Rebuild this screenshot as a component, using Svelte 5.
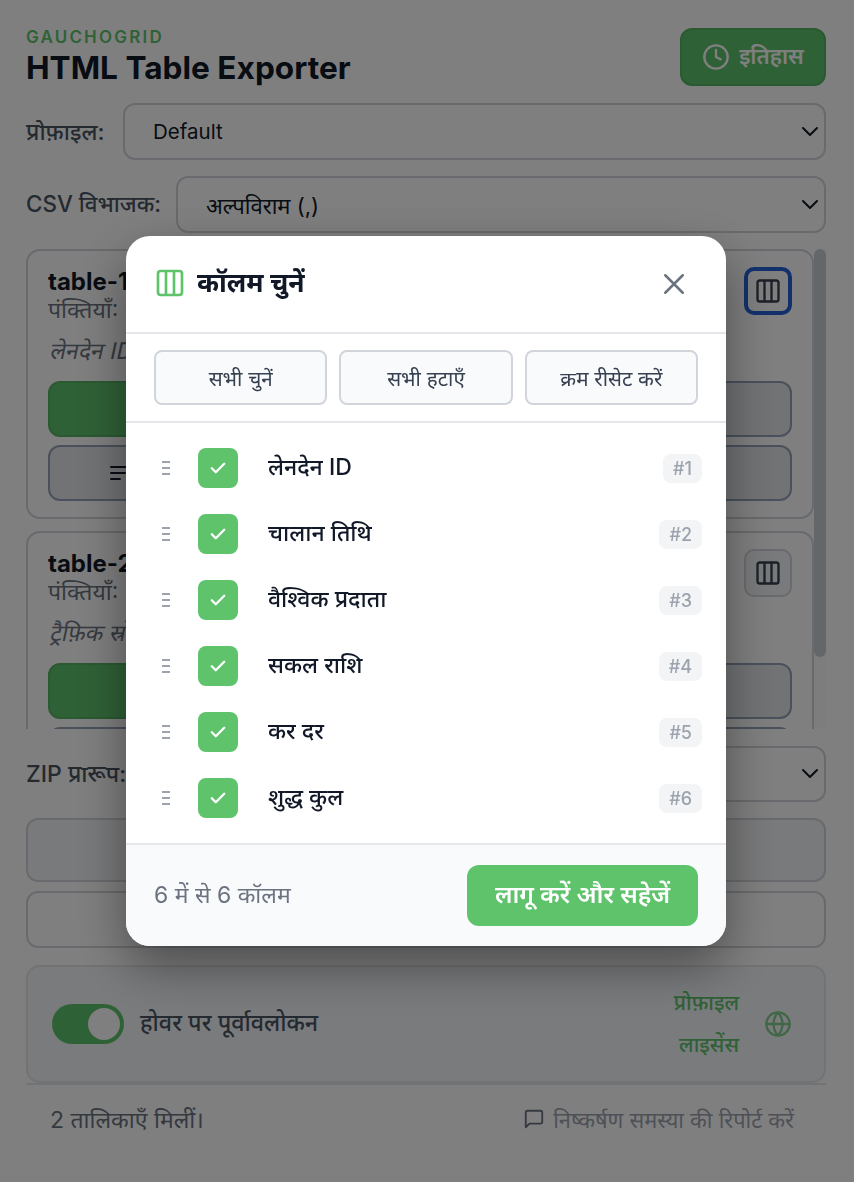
<script>
  const columns = ['लेनदेन ID', 'चालान तिथि', 'वैश्विक प्रदाता', 'सकल राशि', 'कर दर', 'शुद्ध कुल'];
  const tables = [
    { id: 'table-1', rows: 'पंक्तियाँ: 6', preview: 'लेनदेन ID, चालान तिथि', focused: true },
    { id: 'table-2', rows: 'पंक्तियाँ: 8', preview: 'ट्रैफ़िक स्रोत, सत्र', focused: false }
  ];
</script>

{#snippet columnsIcon(cls)}
  <svg class={cls} viewBox="0 0 24 24" fill="none" stroke="currentColor" stroke-width="2" stroke-linejoin="round">
    <rect x="3" y="3" width="18" height="18" rx="2" />
    <path d="M9 3v18M15 3v18" />
  </svg>
{/snippet}

{#snippet chevron()}
  <svg class="chevron" viewBox="0 0 20 20" fill="none" stroke="currentColor" stroke-width="2" stroke-linecap="round" stroke-linejoin="round">
    <path d="M3 6l7 7 7-7" />
  </svg>
{/snippet}

<div class="page">
  <header class="top">
    <div>
      <div class="brand">GAUCHOGRID</div>
      <h1>HTML Table Exporter</h1>
    </div>
    <button class="history">
      <svg viewBox="0 0 24 24" fill="none" stroke="currentColor" stroke-width="2" stroke-linecap="round" stroke-linejoin="round">
        <circle cx="12" cy="12" r="10" />
        <path d="M12 6v6l4 2" />
      </svg>
      <span>इतिहास</span>
    </button>
  </header>

  <div class="field">
    <span class="field-label profile">प्रोफ़ाइल:</span>
    <div class="select">Default {@render chevron()}</div>
  </div>
  <div class="field">
    <span class="field-label csv">CSV विभाजक:</span>
    <div class="select hi">अल्पविराम (,) {@render chevron()}</div>
  </div>

  <div class="scroller">
    <div class="cards">
      {#each tables as t}
        <section class="card">
          <div class="card-head">
            <div>
              <div class="card-title">{t.id}</div>
              <div class="card-rows">{t.rows}</div>
            </div>
            <button class="col-btn" class:focused={t.focused}>{@render columnsIcon('col-icon')}</button>
          </div>
          <div class="card-preview"><span>{t.preview}</span></div>
          <div class="card-actions">
            <button class="solid"></button>
            <button class="outline"></button>
          </div>
          <button class="outline wide">
            <svg viewBox="0 0 24 24" fill="none" stroke="currentColor" stroke-width="2" stroke-linecap="round">
              <path d="M3 6h18M3 12h14M3 18h9" />
            </svg>
          </button>
        </section>
      {/each}
    </div>
    <div class="scrollbar"><div class="thumb"></div></div>
  </div>

  <div class="field zip">
    <span class="field-label">ZIP प्रारूप:</span>
    <div class="select">{@render chevron()}</div>
  </div>

  <div class="big-btn tall"></div>
  <div class="big-btn"></div>

  <div class="settings">
    <div class="toggle-wrap">
      <div class="toggle"><div class="knob"></div></div>
      <span class="toggle-text">होवर पर पूर्वावलोकन</span>
    </div>
    <div class="links">
      <div class="link-col">
        <span>प्रोफ़ाइल</span>
        <span>लाइसेंस</span>
      </div>
      <svg class="globe" viewBox="0 0 24 24" fill="none" stroke="currentColor" stroke-width="2">
        <circle cx="12" cy="12" r="10" />
        <path d="M2 12h20M12 2a15 15 0 0 1 0 20M12 2a15 15 0 0 0 0 20" />
      </svg>
    </div>
  </div>

  <footer class="status">
    <span class="count">2 तालिकाएँ मिलीं।</span>
    <span class="report">
      <svg viewBox="0 0 24 24" fill="none" stroke="currentColor" stroke-width="2" stroke-linejoin="round">
        <path d="M21 15a2 2 0 0 1-2 2H7l-4 4V5a2 2 0 0 1 2-2h14a2 2 0 0 1 2 2z" />
      </svg>
      निष्कर्षण समस्या की रिपोर्ट करें
    </span>
  </footer>
</div>

<div class="overlay">
  <div class="modal">
    <div class="modal-head">
      <div class="modal-title">
        {@render columnsIcon('title-icon')}
        <span>कॉलम चुनें</span>
      </div>
      <svg class="close" viewBox="0 0 24 24" fill="none" stroke="currentColor" stroke-width="2" stroke-linecap="round">
        <path d="M5 5l14 14M19 5L5 19" />
      </svg>
    </div>

    <div class="modal-tools">
      <button>सभी चुनें</button>
      <button>सभी हटाएँ</button>
      <button>क्रम रीसेट करें</button>
    </div>

    <div class="col-list">
      {#each columns as name, i}
        <div class="col-row">
          <div class="drag"><i></i><i></i><i></i></div>
          <div class="check">
            <svg viewBox="0 0 16 16" fill="none" stroke="#fff" stroke-width="2.3" stroke-linecap="round" stroke-linejoin="round">
              <path d="M1.8 8.3l4 4L14.2 3.8" />
            </svg>
          </div>
          <span class="col-name">{name}</span>
          <span class="badge">#{i + 1}</span>
        </div>
      {/each}
    </div>

    <div class="modal-foot">
      <span class="foot-count">6 में से 6 कॉलम</span>
      <button class="apply">लागू करें और सहेजें</button>
    </div>
  </div>
</div>

<style>
  :global(body) {
    margin: 0;
    background: #fff;
    font-family: Inter, "Noto Sans", "Noto Sans Devanagari", sans-serif;
    color: #111827;
  }

  button {
    font-family: inherit;
    padding: 0;
  }

  .page {
    box-sizing: border-box;
    width: 854px;
    height: 1182px;
    padding: 28px 28px 0 26px;
    display: flex;
    flex-direction: column;
    overflow: hidden;
  }

  .top {
    display: flex;
    justify-content: space-between;
    align-items: flex-start;
    margin-bottom: 13px;
  }

  .brand {
    color: #5fc36c;
    font-size: 17px;
    font-weight: 600;
    letter-spacing: 2.2px;
    line-height: 18px;
  }

  h1 {
    margin: 0;
    font-size: 31.6px;
    font-weight: 700;
    line-height: 44px;
  }

  .history {
    box-sizing: border-box;
    width: 146px;
    height: 58px;
    display: flex;
    align-items: center;
    justify-content: center;
    gap: 9px;
    background: #5fc36c;
    border: 2px solid #56b263;
    border-radius: 12px;
    color: #fff;
    font-size: 22px;
    font-weight: 600;
  }

  .history span {
    margin-bottom: 4px;
  }

  .history svg {
    width: 28px;
    height: 28px;
  }

  .field {
    display: flex;
    align-items: center;
    gap: 17px;
    margin-bottom: 16px;
  }

  .field-label {
    font-size: 23px;
    font-weight: 500;
    color: #4b5563;
    white-space: nowrap;
    margin-bottom: 2px;
  }

  .field-label.profile {
    width: 80px;
  }

  .field-label.csv {
    width: 133px;
    font-size: 22.4px;
  }

  .select {
    box-sizing: border-box;
    flex: 1;
    height: 57px;
    padding: 0 4px 0 28px;
    display: flex;
    align-items: center;
    justify-content: space-between;
    border: 2px solid #d1d5db;
    border-radius: 12px;
    font-size: 20.5px;
  }

  .select.hi {
    font-size: 22px;
  }

  .chevron {
    width: 20px;
    height: 20px;
    margin-left: auto;
    color: #111827;
  }

  .scroller {
    display: flex;
    height: 480px;
    overflow: hidden;
    flex: none;
  }

  .cards {
    width: 788px;
    flex: none;
    display: flex;
    flex-direction: column;
    gap: 12px;
  }

  .card {
    box-sizing: border-box;
    height: 270px;
    flex: none;
    padding: 16px 20px;
    border: 2px solid #d1d5db;
    border-radius: 14px;
  }

  .card-head {
    display: flex;
    justify-content: space-between;
    align-items: flex-start;
  }

  .card-title {
    font-size: 24px;
    font-weight: 700;
    line-height: 29px;
  }

  .card-rows {
    font-size: 23px;
    color: #6b7280;
    line-height: 28px;
  }

  .card-preview {
    margin-top: 13px;
    font-size: 23px;
    color: #6b7280;
    line-height: 28px;
    white-space: nowrap;
  }

  /* the Devanagari fallback has no italic face, so it is slanted by hand */
  .card-preview span {
    display: inline-block;
    transform: skewX(-12deg);
    transform-origin: left bottom;
  }

  .col-btn {
    box-sizing: border-box;
    width: 48px;
    height: 48px;
    display: flex;
    align-items: center;
    justify-content: center;
    background: #f3f4f6;
    border: 2px solid #d1d5db;
    border-radius: 10px;
    color: #374151;
  }

  .col-btn.focused {
    background: transparent;
    border: 4px solid #2563d9;
  }

  :global(.col-icon) {
    width: 28px;
    height: 28px;
  }

  .card-actions {
    display: flex;
    gap: 8px;
    margin-top: 16px;
  }

  .solid {
    flex: 1;
    height: 56px;
    background: #5fc36c;
    border: 2px solid #56b263;
    border-radius: 12px;
  }

  .outline {
    flex: 1;
    box-sizing: border-box;
    height: 56px;
    background: #e5e7eb;
    border: 2px solid #94a3b8;
    border-radius: 12px;
    color: #111827;
  }

  .outline.wide {
    display: block;
    width: 100%;
    margin-top: 8px;
  }

  .outline.wide svg {
    width: 24px;
    height: 24px;
    display: block;
    margin-left: 58px;
  }

  .scrollbar {
    width: 12px;
    flex: none;
    background: #fafafa;
    border-radius: 6px;
  }

  .thumb {
    height: 408px;
    background: #c8ced3;
    border-radius: 6px;
  }

  .zip {
    margin-top: 17px;
    margin-bottom: 16px;
  }

  .zip .select {
    height: 56px;
  }

  .big-btn {
    box-sizing: border-box;
    height: 57px;
    flex: none;
    margin-bottom: 17px;
    border: 2px solid #d1d5db;
    border-radius: 12px;
  }

  .big-btn.tall {
    height: 64px;
    margin-bottom: 9px;
    background: #f3f4f6;
  }

  .settings {
    box-sizing: border-box;
    height: 118px;
    flex: none;
    padding: 0 32px 0 24px;
    display: flex;
    align-items: center;
    justify-content: space-between;
    border: 2px solid #e5e7eb;
    border-radius: 14px;
    background: #f3f6fa;
  }

  .toggle-wrap {
    display: flex;
    align-items: center;
    gap: 16px;
    font-size: 23.3px;
    font-weight: 500;
    color: #4b5563;
  }

  .toggle-text {
    margin-bottom: 5px;
  }

  .toggle {
    box-sizing: border-box;
    width: 72px;
    height: 40px;
    padding: 4px;
    display: flex;
    justify-content: flex-end;
    border-radius: 20px;
    background: #5fc36c;
  }

  .knob {
    width: 32px;
    height: 32px;
    border-radius: 50%;
    background: #fff;
  }

  .links {
    display: flex;
    align-items: center;
    gap: 25px;
    color: #5fc36c;
  }

  .link-col {
    display: flex;
    flex-direction: column;
    align-items: flex-end;
    gap: 14px;
    font-size: 21px;
    font-weight: 500;
    line-height: 28px;
  }

  .globe {
    width: 28px;
    height: 28px;
    opacity: 0.75;
  }

  .status {
    display: flex;
    justify-content: space-between;
    align-items: center;
    padding: 11px 32px 0 24px;
    border-top: 2px solid #e5e7eb;
    height: 46px;
    flex: none;
  }

  .count {
    font-size: 23px;
    color: #6b7280;
  }

  .report {
    display: flex;
    align-items: center;
    gap: 8px;
    font-size: 21.8px;
    color: #9ca3af;
  }

  .report svg {
    width: 22px;
    height: 22px;
    color: #6b7280;
  }

  .overlay {
    position: fixed;
    inset: 0;
    padding-right: 2px;
    background: rgba(0, 0, 0, 0.5);
    display: flex;
    justify-content: center;
    align-items: center;
  }

  .modal {
    width: 600px;
    height: 710px;
    display: flex;
    flex-direction: column;
    background: #fff;
    border-radius: 24px;
    overflow: hidden;
    box-shadow: 0 20px 50px rgba(0, 0, 0, 0.4);
  }

  .modal-head {
    box-sizing: border-box;
    height: 98px;
    flex: none;
    padding: 0 37px 0 28px;
    display: flex;
    align-items: center;
    justify-content: space-between;
    border-bottom: 2px solid #e5e7eb;
  }

  .modal-title {
    display: flex;
    align-items: center;
    gap: 11px;
    font-size: 26.5px;
    font-weight: 700;
    margin-top: -2px;
  }

  .modal-title span {
    margin-bottom: 2px;
  }

  :global(.title-icon) {
    width: 32px;
    height: 32px;
    color: #5fc36c;
  }

  .close {
    width: 30px;
    height: 30px;
    color: #6b7280;
  }

  .modal-tools {
    box-sizing: border-box;
    height: 89px;
    flex: none;
    padding: 16px 28px;
    display: grid;
    grid-template-columns: 1fr 1fr 1fr;
    gap: 12px;
    border-bottom: 2px solid #e5e7eb;
  }

  .modal-tools button {
    height: 55px;
    background: #f9fafb;
    border: 2px solid #d1d5db;
    border-radius: 8px;
    font-size: 20.6px;
    font-weight: 400;
    color: #374151;
  }

  .col-list {
    flex: 1;
    padding: 12px 24px 0 36px;
    display: flex;
    flex-direction: column;
  }

  .col-row {
    height: 66px;
    flex: none;
    display: flex;
    align-items: center;
  }

  .drag {
    width: 8px;
    display: flex;
    flex-direction: column;
    gap: 4px;
    margin-right: 28px;
  }

  .drag i {
    display: block;
    height: 2px;
    background: #9ca3af;
  }

  .check {
    width: 40px;
    height: 40px;
    border-radius: 8px;
    background: #5fc36c;
    display: flex;
    align-items: center;
    justify-content: center;
  }

  .check svg {
    width: 16px;
    height: 16px;
  }

  .col-name {
    margin-left: 30px;
    margin-bottom: 4px;
    font-size: 23px;
    font-weight: 500;
  }

  .badge {
    margin-left: auto;
    padding: 0 10px;
    height: 29px;
    line-height: 29px;
    background: #f3f4f6;
    border-radius: 8px;
    font-size: 18px;
    font-weight: 500;
    color: #9ca3af;
  }

  .modal-foot {
    box-sizing: border-box;
    height: 103px;
    flex: none;
    padding: 0 28px;
    display: flex;
    align-items: center;
    justify-content: space-between;
    background: #f9fafb;
    border-top: 2px solid #e5e7eb;
  }

  .foot-count {
    font-size: 23px;
    color: #6b7280;
    margin-bottom: 4px;
  }

  .apply {
    box-sizing: border-box;
    width: 231px;
    height: 61px;
    padding-bottom: 5px;
    border: 0;
    border-radius: 12px;
    background: #5fc36c;
    color: #fff;
    font-size: 24.5px;
    font-weight: 600;
  }
</style>
